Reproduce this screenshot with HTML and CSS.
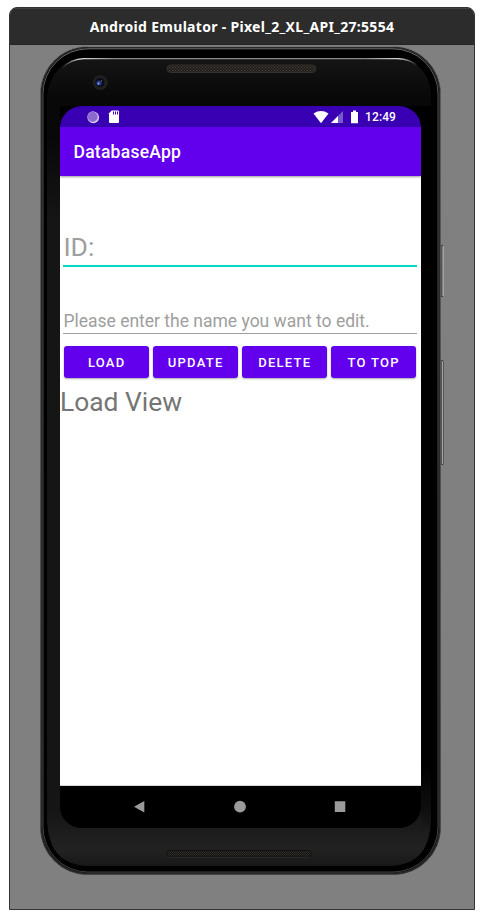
FILE: index.html
```html
<!DOCTYPE html>
<html lang="en">
<head>
<meta charset="utf-8">
<title>Android Emulator</title>
<link rel="stylesheet" href="styles.css">
</head>
<body>
<div class="window">
  <header class="titlebar"><span>Android Emulator - Pixel_2_XL_API_27:5554</span></header>
  <main class="desktop">
    <div class="phone">
      <i class="side-key power"></i>
      <i class="side-key volume"></i>
      <svg class="shell" width="401" height="829" viewBox="0 0 401 829">
        <defs>
          <linearGradient id="face" x1="0" y1="0" x2="0" y2="1">
            <stop offset="0" stop-color="#151515"/><stop offset=".05" stop-color="#080808"/>
            <stop offset=".1" stop-color="#080808"/><stop offset=".2" stop-color="#151515"/>
            <stop offset=".93" stop-color="#151515"/><stop offset=".98" stop-color="#222"/><stop offset="1" stop-color="#181818"/>
          </linearGradient>
          <linearGradient id="glint" x1="0" y1="0" x2="1" y2="0">
            <stop offset="0" stop-color="#ddd" stop-opacity="0"/><stop offset=".05" stop-color="#ddd"/>
            <stop offset=".15" stop-color="#888"/><stop offset=".85" stop-color="#888"/>
            <stop offset=".95" stop-color="#ddd"/><stop offset="1" stop-color="#ddd" stop-opacity="0"/>
          </linearGradient>
          <linearGradient id="edge" x1="0" y1="0" x2="0" y2="1">
            <stop offset="0" stop-color="#000"/><stop offset=".88" stop-color="#000"/><stop offset=".97" stop-color="#000" stop-opacity="0"/>
          </linearGradient>
          <linearGradient id="rim" x1="0" y1="0" x2="0" y2="1">
            <stop offset="0" stop-color="#777"/><stop offset=".06" stop-color="#5a5a5a"/><stop offset=".95" stop-color="#4a4a4a"/><stop offset="1" stop-color="#444"/>
          </linearGradient>
          <pattern id="mesh" width="3" height="3" patternUnits="userSpaceOnUse">
            <rect width="3" height="3" fill="#211f1c"/><rect width="1" height="1" fill="#4b453d"/><rect x="1.5" y="1.5" width="1" height="1" fill="#4b453d"/>
          </pattern>
          <pattern id="darkmesh" width="2" height="2" patternUnits="userSpaceOnUse">
            <rect width="2" height="2" fill="#141311"/><rect width="1" height="1" fill="#35322d"/><rect x="1" y="1" width="1" height="1" fill="#2b2925"/>
          </pattern>
        </defs>
        <rect x=".5" y=".5" width="400" height="828" rx="47" fill="#000" stroke="url(#rim)"/>
        <rect x="1.7" y="1.7" width="397.6" height="825.6" rx="46" fill="none" stroke="#292929" stroke-width="1.4"/>
        <rect x="3" y="2.8" width="395" height="823.2" rx="45" fill="none" stroke="url(#rim)" stroke-width=".9"/>
        <rect x="4" y="4" width="393" height="819" rx="44" fill="#000"/>
        <path d="M7 60V55C7 30 22 13 45 12H355C378 13 391 29 391 52V770C391 803 378 819 350 820H48C20 819 7 803 7 770Z" fill="url(#face)"/>
        <path d="M381 60H397V780Q397 800 389 808L381 780Z" fill="url(#edge)"/>
        <path d="M22 22Q31 13 44 12.6H357Q370 13 378 20" fill="none" stroke="url(#glint)" stroke-width="1.2"/>
        <rect x="127" y="19" width="149" height="7.5" rx="3.7" fill="url(#mesh)" stroke="#33302d"/>
        <rect x="126.5" y="804.5" width="145" height="6" rx="3" fill="url(#darkmesh)" stroke="#111"/>
        <path d="M129 811.2H269" stroke="#2c2c2c"/>
        <circle cx="60.3" cy="36.5" r="7.5" fill="#202020"/>
        <circle cx="60" cy="36.5" r="4.5" fill="#0b0c18"/>
        <circle cx="59" cy="37" r="2.5" fill="#293d86"/><circle cx="58.4" cy="37.6" r="1.1" fill="#7d9bf0"/><circle cx="61.5" cy="34.8" r=".6" fill="#7687a8"/>
        <path d="M20 60H42V82H20ZM360 60H381V82H360Z" fill="#000"/>
      </svg>
      <section class="screen">
        <div class="statusbar">
          <svg class="left-icons" width="34" height="14" viewBox="0 0 34 14">
            <circle cx="6.3" cy="7.4" r="5.8" fill="#ddd3f5"/><circle cx="5.7" cy="6.8" r="5.1" fill="#8b69cf" stroke="#b29de0" stroke-dasharray="1 1"/>
            <path d="M24.7 .5H31Q32 .5 32 1.5V12Q32 13 31 13H23Q22 13 22 12V3.2Z" fill="#fff"/>
            <path d="M26.5 1.5V4.5M28.5 1.5V4.5M30.5 1.5V4.5" stroke="#3900b3"/>
          </svg>
          <svg class="right-icons" width="46" height="14" viewBox="0 0 46 14">
            <path d="M.5 3.5Q8 -1.3 15.5 3.5L8 13.2Z" fill="#fff"/>
            <path d="M18 13L30 1V13Z" fill="#765ccb"/><path d="M18 13L25 6V13Z" fill="#fff"/>
            <path d="M38 2H40V.5H43V2H45V13.2H38Z" fill="#fff"/>
          </svg>
          <time>12:49</time>
        </div>
        <div class="appbar">DatabaseApp</div>
        <div class="content">
          <div class="field id-field">ID:</div>
          <div class="field name-field">Please enter the name you want to edit.</div>
          <div class="buttons">
            <button>LOAD</button><button>UPDATE</button><button>DELETE</button><button>TO TOP</button>
          </div>
          <div class="result">Load View</div>
        </div>
        <nav class="navbar">
          <svg width="12" height="14" viewBox="0 0 12 14"><path d="M0 6.7L10.3 1V12.5Z" fill="#9b9b9b"/></svg>
          <svg width="12" height="14" viewBox="0 0 12 14"><circle cx="6" cy="6.7" r="5.9" fill="#9b9b9b"/></svg>
          <svg width="12" height="14" viewBox="0 0 12 14"><path d="M.8 1.3H11.3V12.1H.8Z" fill="#9b9b9b"/></svg>
        </nav>
      </section>
    </div>
  </main>
</div>
</body>
</html>
```

FILE: styles.css
```css
* { box-sizing: border-box; }
body { margin: 0; padding: 7px 0 0 9px; background: #fff; font-family: Roboto, sans-serif; overflow: hidden; }
.window { width: 466px; height: 903px; border: 1px solid #333; border-radius: 8px 8px 0 0; background: #808080; overflow: hidden; }
.titlebar { height: 37px; background: #2c2c2c; border-top: 1px solid #424242; border-bottom: 1px solid #242424; color: #fff; font: 700 14px/36px "Noto Sans", sans-serif; letter-spacing: .3px; text-align: center; white-space: nowrap; }
.desktop { padding: 1px 0 0 30px; }
.phone { position: relative; width: 401px; height: 829px; padding: 60px 20px 47px; }
.shell { position: absolute; left: 0; top: 0; }
.side-key { position: absolute; left: 400px; width: 4px; border: 1px solid #333; border-left: 2px solid #555; border-right-color: #aaa0a0; border-radius: 0 2px 2px 0; }
.power { top: 199px; height: 52px; }
.volume { top: 314px; height: 105px; }
.volume { border-right-color: #5a5656; background: #aaa0a0; }
.screen { position: relative; width: 361px; height: 722px; display: flex; flex-direction: column; border-radius: 22px; overflow: hidden; background: #000; }
.statusbar { height: 21px; flex: none; display: flex; align-items: center; padding: 0 25px 0 27px; background: #3900b3; color: #fff; }
.right-icons { margin-left: auto; margin-right: 6px; }
time { font-size: 12px; font-weight: 500; line-height: 20px; letter-spacing: .1px; }
.appbar { height: 49px; flex: none; padding-left: 13.5px; background: #6200ee; color: #fff; font-size: 17.5px; font-weight: 500; line-height: 51px; letter-spacing: .25px; box-shadow: 0 1px 2px #0006; z-index: 1; }
.content { flex: 1; padding-top: 50px; background: #fff; }
.field { margin: 0 4px 0 3.4px; color: #9e9e9e; white-space: nowrap; }
.id-field { height: 41px; border-bottom: 2px solid #03dac5; font-size: 26.5px; line-height: 41px; }
.name-field { height: 38px; margin-top: 29px; border-bottom: 1px solid #a0a0a0; font-size: 17.5px; line-height: 51px; }
.buttons { display: grid; grid-template-columns: repeat(4, 85px); gap: 4px; margin: 12px 0 0 4.2px; }
button { height: 32px; padding: 0; border: 0; border-radius: 3px; background: #6200ee; color: #fff; font: 500 13px/33px Roboto, sans-serif; letter-spacing: 1.25px; text-align: center; box-shadow: 0 1px 2px #0005; }
.result { margin-top: 6px; color: #757575; font-size: 26.4px; line-height: 36px; white-space: nowrap; }
.navbar { height: 43px; flex: none; display: flex; justify-content: center; align-items: center; gap: 88px; padding-right: 2px; background: #000; border-top: 1px solid #d4d8d7; background-clip: padding-box; }
```
